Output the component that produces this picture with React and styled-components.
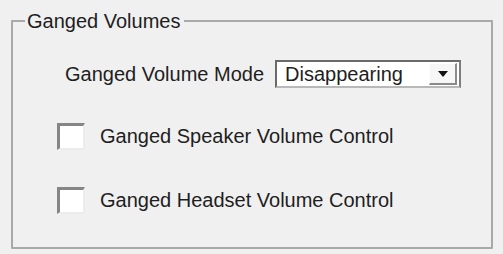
import React from 'react';
import styled, { createGlobalStyle } from 'styled-components';

const Global = createGlobalStyle`
  html, body {
    margin: 0;
    padding: 0;
    background: #f0f0f0;
  }
  body {
    font-family: "Liberation Sans", Arial, sans-serif;
    font-size: 20px;
    color: #1e1e1e;
  }
`;

const Page = styled.div`
  padding: 9px 0 0 11px;
`;

const Group = styled.fieldset`
  box-sizing: border-box;
  width: 482px;
  height: 240px;
  margin: 0;
  padding: 0 0 0 44px;
  border: 2px solid #a9a9a9;
  border-radius: 1px;
`;

const Title = styled.legend`
  margin-left: -32px;
  padding: 0 4px 0 2px;
  line-height: 24px;
`;

const ModeRow = styled.div`
  display: flex;
  align-items: center;
  gap: 11px;
  margin: 27px 0 0 8px;
`;

const Combo = styled.div`
  box-sizing: border-box;
  width: 186px;
  height: 28px;
  display: flex;
  align-items: center;
  background: #fff;
  border-style: solid;
  border-width: 2px;
  border-color: #6a6a6a #7c7c7c #b8b8b8 #6a6a6a;
`;

const ComboText = styled.span`
  flex: 1;
  padding-left: 8px;
  line-height: 24px;
`;

const ComboButton = styled.span`
  box-sizing: border-box;
  width: 28px;
  height: 22px;
  margin-right: 2px;
  display: flex;
  align-items: center;
  justify-content: center;
  background: #f6f6f6;
  border-style: solid;
  border-width: 1px 2px 2px 1px;
  border-color: #fff #8a8a8a #8a8a8a #fff;
`;

const Arrow = styled.span`
  width: 0;
  height: 0;
  border-left: 5px solid transparent;
  border-right: 5px solid transparent;
  border-top: 6px solid #111;
`;

const CheckRow = styled.label`
  display: flex;
  align-items: center;
  gap: 15px;
  margin-top: ${(p) => p.$top}px;
`;

const Box = styled.span`
  box-sizing: border-box;
  width: 28px;
  height: 27px;
  background: #fff;
  border-style: solid;
  border-width: 3px 2px 2px 3px;
  border-color: #858585 #ececec #ececec #858585;
`;

export default function App() {
  return (
    <>
      <Global />
      <Page>
        <Group>
          <Title>Ganged Volumes</Title>
          <ModeRow>
            <span>Ganged Volume Mode</span>
            <Combo>
              <ComboText>Disappearing</ComboText>
              <ComboButton>
                <Arrow />
              </ComboButton>
            </Combo>
          </ModeRow>
          <CheckRow $top={35}>
            <Box />
            <span>Ganged Speaker Volume Control</span>
          </CheckRow>
          <CheckRow $top={37}>
            <Box />
            <span>Ganged Headset Volume Control</span>
          </CheckRow>
        </Group>
      </Page>
    </>
  );
}
